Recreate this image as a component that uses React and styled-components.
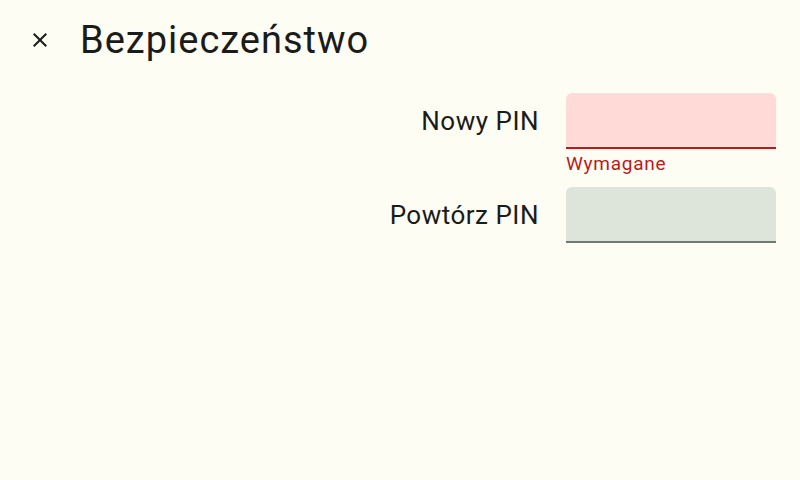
import React from 'react';
import styled, { createGlobalStyle } from 'styled-components';

const GlobalStyle = createGlobalStyle`
  html, body {
    margin: 0;
    padding: 0;
    background: #fefdf4;
  }
  body {
    font-family: Roboto, "Noto Sans", sans-serif;
    color: #1a1c19;
  }
`;

const Page = styled.div`
  width: 800px;
  height: 480px;
  background: #fefdf4;
  display: flex;
  flex-direction: column;
`;

const AppBar = styled.header`
  height: 80px;
  display: flex;
  align-items: center;
  padding-left: 28px;
`;

const CloseButton = styled.button`
  width: 24px;
  height: 24px;
  padding: 0;
  border: none;
  background: none;
  color: #1a1c19;
  display: flex;
  align-items: center;
  justify-content: center;
  cursor: pointer;
`;

const Title = styled.h1`
  margin: 0 0 0 28px;
  font-size: 38px;
  font-weight: 400;
  line-height: 1;
  letter-spacing: 1px;
`;

const Form = styled.div`
  display: flex;
  flex-direction: column;
  padding: 13px 24px 0 0;
`;

const Row = styled.div`
  display: flex;
  justify-content: flex-end;
  align-items: flex-start;
  gap: 27px;
  margin-bottom: ${p => p.$error ? '0' : '8px'};
`;

const Label = styled.label`
  height: 56px;
  display: flex;
  align-items: center;
  font-size: 26px;
  letter-spacing: 0.5px;
`;

const FieldColumn = styled.div`
  width: 210px;
  display: flex;
  flex-direction: column;
`;

const Field = styled.input`
  box-sizing: border-box;
  width: 210px;
  height: 56px;
  border: none;
  border-bottom: ${p => p.$error ? '2px solid #ba1a1a' : '2px solid #72796f'};
  border-radius: 6px 6px 0 0;
  background: ${p => p.$error ? '#ffdad6' : '#dde5db'};
  outline: none;
  font-family: inherit;
  font-size: 24px;
  padding: 0 18px;
`;

const ErrorText = styled.div`
  color: #ba1a1a;
  font-size: 19px;
  letter-spacing: 0.75px;
  line-height: 26px;
  padding-top: 2px;
  height: 36px;
`;

const CloseIcon = () => (
  <svg width="24" height="24" viewBox="0 0 24 24" fill="currentColor">
    <path d="M19 6.41L17.59 5 12 10.59 6.41 5 5 6.41 10.59 12 5 17.59 6.41 19 12 13.41 17.59 19 19 17.59 13.41 12z" />
  </svg>
);

export default function App() {
  return (
    <>
      <GlobalStyle />
      <Page>
        <AppBar>
          <CloseButton aria-label="Zamknij">
            <CloseIcon />
          </CloseButton>
          <Title>Bezpieczeństwo</Title>
        </AppBar>
        <Form>
          <Row $error>
            <Label>Nowy PIN</Label>
            <FieldColumn>
              <Field type="password" $error />
              <ErrorText>Wymagane</ErrorText>
            </FieldColumn>
          </Row>
          <Row>
            <Label>Powtórz PIN</Label>
            <FieldColumn>
              <Field type="password" />
            </FieldColumn>
          </Row>
        </Form>
      </Page>
    </>
  );
}
